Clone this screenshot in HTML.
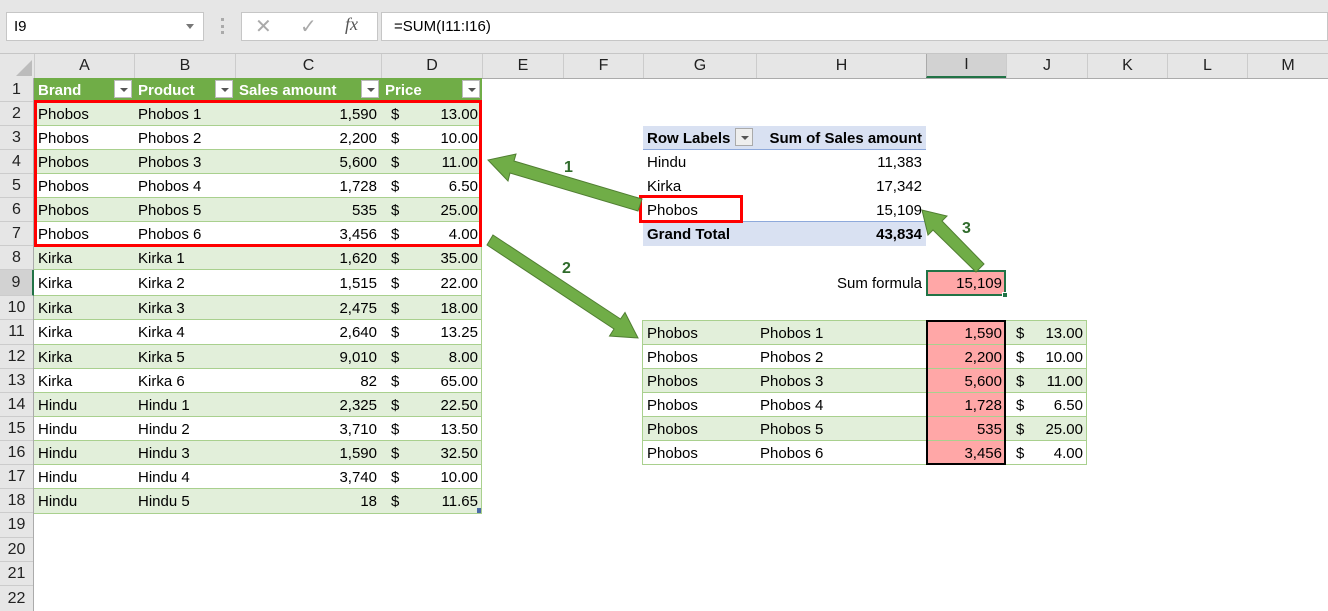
<!DOCTYPE html>
<html><head><meta charset="utf-8"><style>
*{margin:0;padding:0;box-sizing:border-box}
body{width:1328px;height:611px;overflow:hidden;background:#fff;position:relative;font-family:"Liberation Sans",Calibri,sans-serif;font-size:15px;color:#000}
.a{position:absolute}
.c{position:absolute;display:flex;align-items:center;padding:0 4px;white-space:nowrap}
.r{justify-content:flex-end}
.h{position:absolute;background:#e6e6e6;color:#222;display:flex;align-items:center;justify-content:center;font-size:16px}
.g{background:#e2efda}
.row{position:absolute;left:34px;width:448px;border-bottom:1px solid #a9d08e}
.dd{position:absolute;width:18px;height:18px;background:#fff;border:1px solid #bbb}
.dd:after{content:"";position:absolute;left:5px;top:7px;border:4px solid transparent;border-top:4px solid #555}
</style></head><body>
<div class="a" style="left:0;top:0;width:1328px;height:54px;background:#e6e6e6"></div>
<div class="a" style="left:6px;top:12px;width:198px;height:29px;background:#fff;border:1px solid #c6c6c6"></div>
<div class="a" style="left:14px;top:18px;font-size:15px">I9</div>
<div class="a" style="left:186px;top:24px;border:4px solid transparent;border-top:5px solid #777"></div>
<div class="a" style="left:221px;top:18px;width:3px;height:16px;border-left:3px dotted #aaa"></div>
<div class="a" style="left:241px;top:12px;width:137px;height:29px;background:#fff;border:1px solid #c6c6c6"></div>
<div class="a" style="left:255px;top:14px;color:#aaa;font-size:20px">✕</div>
<div class="a" style="left:300px;top:14px;color:#aaa;font-size:20px">✓</div>
<div class="a" style="left:345px;top:14px;color:#555;font-size:18px;font-style:italic;font-family:'Liberation Serif',serif">fx</div>
<div class="a" style="left:381px;top:12px;width:947px;height:29px;background:#fff;border:1px solid #c6c6c6"></div>
<div class="a" style="left:394px;top:18px">=SUM(I11:I16)</div>
<div class="a" style="left:0;top:53px;width:1328px;height:26px;background:#e6e6e6;border-top:1px solid #c6c6c6;border-bottom:1px solid #ababab"></div>
<div class="a" style="left:16px;top:60px;border:8px solid transparent;border-right:8px solid #bcbcbc;border-bottom:8px solid #bcbcbc"></div>
<div class="h" style="left:34px;top:54px;width:100px;height:24px;border-left:1px solid #ccc">A</div>
<div class="h" style="left:134px;top:54px;width:101px;height:24px;border-left:1px solid #ccc">B</div>
<div class="h" style="left:235px;top:54px;width:146px;height:24px;border-left:1px solid #ccc">C</div>
<div class="h" style="left:381px;top:54px;width:101px;height:24px;border-left:1px solid #ccc">D</div>
<div class="h" style="left:482px;top:54px;width:81px;height:24px;border-left:1px solid #ccc">E</div>
<div class="h" style="left:563px;top:54px;width:80px;height:24px;border-left:1px solid #ccc">F</div>
<div class="h" style="left:643px;top:54px;width:113px;height:24px;border-left:1px solid #ccc">G</div>
<div class="h" style="left:756px;top:54px;width:170px;height:24px;border-left:1px solid #ccc">H</div>
<div class="h" style="left:926px;top:54px;width:80px;height:24px;background:#d2d2d2;border-bottom:2px solid #217346;border-left:1px solid #aaa">I</div>
<div class="h" style="left:1006px;top:54px;width:81px;height:24px;border-left:1px solid #ccc">J</div>
<div class="h" style="left:1087px;top:54px;width:80px;height:24px;border-left:1px solid #ccc">K</div>
<div class="h" style="left:1167px;top:54px;width:80px;height:24px;border-left:1px solid #ccc">L</div>
<div class="h" style="left:1247px;top:54px;width:81px;height:24px;border-left:1px solid #ccc">M</div>
<div class="a" style="left:0;top:78px;width:34px;height:533px;background:#e6e6e6;border-right:1px solid #ababab"></div>
<div class="h" style="left:0;top:78px;width:33px;height:24px;border-bottom:1px solid #ccc">1</div>
<div class="h" style="left:0;top:102px;width:33px;height:24px;border-bottom:1px solid #ccc">2</div>
<div class="h" style="left:0;top:126px;width:33px;height:24px;border-bottom:1px solid #ccc">3</div>
<div class="h" style="left:0;top:150px;width:33px;height:24px;border-bottom:1px solid #ccc">4</div>
<div class="h" style="left:0;top:174px;width:33px;height:24px;border-bottom:1px solid #ccc">5</div>
<div class="h" style="left:0;top:198px;width:33px;height:24px;border-bottom:1px solid #ccc">6</div>
<div class="h" style="left:0;top:222px;width:33px;height:24px;border-bottom:1px solid #ccc">7</div>
<div class="h" style="left:0;top:246px;width:33px;height:24px;border-bottom:1px solid #ccc">8</div>
<div class="h" style="left:0;top:270px;width:34px;height:26px;border-bottom:1px solid #ccc;background:#d2d2d2;border-right:2px solid #217346">9</div>
<div class="h" style="left:0;top:296px;width:33px;height:24px;border-bottom:1px solid #ccc">10</div>
<div class="h" style="left:0;top:320px;width:33px;height:25px;border-bottom:1px solid #ccc">11</div>
<div class="h" style="left:0;top:345px;width:33px;height:24px;border-bottom:1px solid #ccc">12</div>
<div class="h" style="left:0;top:369px;width:33px;height:24px;border-bottom:1px solid #ccc">13</div>
<div class="h" style="left:0;top:393px;width:33px;height:24px;border-bottom:1px solid #ccc">14</div>
<div class="h" style="left:0;top:417px;width:33px;height:24px;border-bottom:1px solid #ccc">15</div>
<div class="h" style="left:0;top:441px;width:33px;height:24px;border-bottom:1px solid #ccc">16</div>
<div class="h" style="left:0;top:465px;width:33px;height:24px;border-bottom:1px solid #ccc">17</div>
<div class="h" style="left:0;top:489px;width:33px;height:24px;border-bottom:1px solid #ccc">18</div>
<div class="h" style="left:0;top:513px;width:33px;height:25px;border-bottom:1px solid #ccc">19</div>
<div class="h" style="left:0;top:538px;width:33px;height:24px;border-bottom:1px solid #ccc">20</div>
<div class="h" style="left:0;top:562px;width:33px;height:24px;border-bottom:1px solid #ccc">21</div>
<div class="h" style="left:0;top:586px;width:33px;height:25px">22</div>

<div class="a" style="left:34px;top:78px;width:448px;height:24px;background:#70ad47"></div>
<div class="c" style="left:34px;top:78px;height:24px;color:#fff;font-weight:bold">Brand</div><div class="dd" style="left:114px;top:80px"></div>
<div class="c" style="left:134px;top:78px;height:24px;color:#fff;font-weight:bold">Product</div><div class="dd" style="left:215px;top:80px"></div>
<div class="c" style="left:235px;top:78px;height:24px;color:#fff;font-weight:bold">Sales amount</div><div class="dd" style="left:361px;top:80px"></div>
<div class="c" style="left:381px;top:78px;height:24px;color:#fff;font-weight:bold">Price</div><div class="dd" style="left:462px;top:80px"></div>

<div class="row g" style="top:102px;height:24px"></div><div class="c" style="left:34px;top:102px;height:24px">Phobos</div><div class="c" style="left:134px;top:102px;height:24px">Phobos 1</div><div class="c r" style="left:235px;top:102px;height:24px;width:146px">1,590</div><div class="c" style="left:387px;top:102px;height:24px">$</div><div class="c r" style="left:381px;top:102px;height:24px;width:101px">13.00</div>
<div class="row" style="top:126px;height:24px"></div><div class="c" style="left:34px;top:126px;height:24px">Phobos</div><div class="c" style="left:134px;top:126px;height:24px">Phobos 2</div><div class="c r" style="left:235px;top:126px;height:24px;width:146px">2,200</div><div class="c" style="left:387px;top:126px;height:24px">$</div><div class="c r" style="left:381px;top:126px;height:24px;width:101px">10.00</div>
<div class="row g" style="top:150px;height:24px"></div><div class="c" style="left:34px;top:150px;height:24px">Phobos</div><div class="c" style="left:134px;top:150px;height:24px">Phobos 3</div><div class="c r" style="left:235px;top:150px;height:24px;width:146px">5,600</div><div class="c" style="left:387px;top:150px;height:24px">$</div><div class="c r" style="left:381px;top:150px;height:24px;width:101px">11.00</div>
<div class="row" style="top:174px;height:24px"></div><div class="c" style="left:34px;top:174px;height:24px">Phobos</div><div class="c" style="left:134px;top:174px;height:24px">Phobos 4</div><div class="c r" style="left:235px;top:174px;height:24px;width:146px">1,728</div><div class="c" style="left:387px;top:174px;height:24px">$</div><div class="c r" style="left:381px;top:174px;height:24px;width:101px">6.50</div>
<div class="row g" style="top:198px;height:24px"></div><div class="c" style="left:34px;top:198px;height:24px">Phobos</div><div class="c" style="left:134px;top:198px;height:24px">Phobos 5</div><div class="c r" style="left:235px;top:198px;height:24px;width:146px">535</div><div class="c" style="left:387px;top:198px;height:24px">$</div><div class="c r" style="left:381px;top:198px;height:24px;width:101px">25.00</div>
<div class="row" style="top:222px;height:24px"></div><div class="c" style="left:34px;top:222px;height:24px">Phobos</div><div class="c" style="left:134px;top:222px;height:24px">Phobos 6</div><div class="c r" style="left:235px;top:222px;height:24px;width:146px">3,456</div><div class="c" style="left:387px;top:222px;height:24px">$</div><div class="c r" style="left:381px;top:222px;height:24px;width:101px">4.00</div>
<div class="row g" style="top:246px;height:24px"></div><div class="c" style="left:34px;top:246px;height:24px">Kirka</div><div class="c" style="left:134px;top:246px;height:24px">Kirka 1</div><div class="c r" style="left:235px;top:246px;height:24px;width:146px">1,620</div><div class="c" style="left:387px;top:246px;height:24px">$</div><div class="c r" style="left:381px;top:246px;height:24px;width:101px">35.00</div>
<div class="row" style="top:270px;height:26px"></div><div class="c" style="left:34px;top:270px;height:26px">Kirka</div><div class="c" style="left:134px;top:270px;height:26px">Kirka 2</div><div class="c r" style="left:235px;top:270px;height:26px;width:146px">1,515</div><div class="c" style="left:387px;top:270px;height:26px">$</div><div class="c r" style="left:381px;top:270px;height:26px;width:101px">22.00</div>
<div class="row g" style="top:296px;height:24px"></div><div class="c" style="left:34px;top:296px;height:24px">Kirka</div><div class="c" style="left:134px;top:296px;height:24px">Kirka 3</div><div class="c r" style="left:235px;top:296px;height:24px;width:146px">2,475</div><div class="c" style="left:387px;top:296px;height:24px">$</div><div class="c r" style="left:381px;top:296px;height:24px;width:101px">18.00</div>
<div class="row" style="top:320px;height:25px"></div><div class="c" style="left:34px;top:320px;height:25px">Kirka</div><div class="c" style="left:134px;top:320px;height:25px">Kirka 4</div><div class="c r" style="left:235px;top:320px;height:25px;width:146px">2,640</div><div class="c" style="left:387px;top:320px;height:25px">$</div><div class="c r" style="left:381px;top:320px;height:25px;width:101px">13.25</div>
<div class="row g" style="top:345px;height:24px"></div><div class="c" style="left:34px;top:345px;height:24px">Kirka</div><div class="c" style="left:134px;top:345px;height:24px">Kirka 5</div><div class="c r" style="left:235px;top:345px;height:24px;width:146px">9,010</div><div class="c" style="left:387px;top:345px;height:24px">$</div><div class="c r" style="left:381px;top:345px;height:24px;width:101px">8.00</div>
<div class="row" style="top:369px;height:24px"></div><div class="c" style="left:34px;top:369px;height:24px">Kirka</div><div class="c" style="left:134px;top:369px;height:24px">Kirka 6</div><div class="c r" style="left:235px;top:369px;height:24px;width:146px">82</div><div class="c" style="left:387px;top:369px;height:24px">$</div><div class="c r" style="left:381px;top:369px;height:24px;width:101px">65.00</div>
<div class="row g" style="top:393px;height:24px"></div><div class="c" style="left:34px;top:393px;height:24px">Hindu</div><div class="c" style="left:134px;top:393px;height:24px">Hindu 1</div><div class="c r" style="left:235px;top:393px;height:24px;width:146px">2,325</div><div class="c" style="left:387px;top:393px;height:24px">$</div><div class="c r" style="left:381px;top:393px;height:24px;width:101px">22.50</div>
<div class="row" style="top:417px;height:24px"></div><div class="c" style="left:34px;top:417px;height:24px">Hindu</div><div class="c" style="left:134px;top:417px;height:24px">Hindu 2</div><div class="c r" style="left:235px;top:417px;height:24px;width:146px">3,710</div><div class="c" style="left:387px;top:417px;height:24px">$</div><div class="c r" style="left:381px;top:417px;height:24px;width:101px">13.50</div>
<div class="row g" style="top:441px;height:24px"></div><div class="c" style="left:34px;top:441px;height:24px">Hindu</div><div class="c" style="left:134px;top:441px;height:24px">Hindu 3</div><div class="c r" style="left:235px;top:441px;height:24px;width:146px">1,590</div><div class="c" style="left:387px;top:441px;height:24px">$</div><div class="c r" style="left:381px;top:441px;height:24px;width:101px">32.50</div>
<div class="row" style="top:465px;height:24px"></div><div class="c" style="left:34px;top:465px;height:24px">Hindu</div><div class="c" style="left:134px;top:465px;height:24px">Hindu 4</div><div class="c r" style="left:235px;top:465px;height:24px;width:146px">3,740</div><div class="c" style="left:387px;top:465px;height:24px">$</div><div class="c r" style="left:381px;top:465px;height:24px;width:101px">10.00</div>
<div class="row g" style="top:489px;height:25px"></div><div class="c" style="left:34px;top:489px;height:24px">Hindu</div><div class="c" style="left:134px;top:489px;height:24px">Hindu 5</div><div class="c r" style="left:235px;top:489px;height:24px;width:146px">18</div><div class="c" style="left:387px;top:489px;height:24px">$</div><div class="c r" style="left:381px;top:489px;height:24px;width:101px">11.65</div>
<div class="a" style="left:477px;top:508px;width:5px;height:5px;background:#4a6aa8"></div>
<div class="a" style="left:481px;top:102px;width:1px;height:412px;background:#a9d08e"></div>
<div class="a" style="left:34px;top:100px;width:448px;height:147px;border:3px solid #f00"></div>

<div class="a" style="left:643px;top:126px;width:283px;height:24px;background:#d9e1f2;border-bottom:1px solid #8ea9db"></div>
<div class="c" style="left:643px;top:126px;height:24px;font-weight:bold">Row Labels</div>
<div class="dd" style="left:735px;top:128px;border-color:#aaa;background:#eee"></div>
<div class="c r" style="left:756px;top:126px;height:24px;width:170px;font-weight:bold">Sum of Sales amount</div>
<div class="c" style="left:643px;top:150px;height:24px">Hindu</div><div class="c r" style="left:756px;top:150px;height:24px;width:170px">11,383</div>
<div class="c" style="left:643px;top:174px;height:24px">Kirka</div><div class="c r" style="left:756px;top:174px;height:24px;width:170px">17,342</div>
<div class="c" style="left:643px;top:198px;height:24px">Phobos</div><div class="c r" style="left:756px;top:198px;height:24px;width:170px">15,109</div>
<div class="a" style="left:643px;top:221px;width:283px;height:25px;background:#d9e1f2;border-top:1px solid #8ea9db"></div>
<div class="c" style="left:643px;top:222px;height:24px;font-weight:bold">Grand Total</div><div class="c r" style="left:756px;top:222px;height:24px;width:170px;font-weight:bold">43,834</div>
<div class="a" style="left:639px;top:195px;width:104px;height:28px;border:3px solid #f00"></div>

<div class="c r" style="left:756px;top:270px;height:26px;width:170px">Sum formula</div>
<div class="a" style="left:926px;top:270px;width:80px;height:26px;background:#ffa7a7;border:2px solid #217346"></div>
<div class="c r" style="left:926px;top:270px;height:26px;width:80px">15,109</div>
<div class="a" style="left:1002px;top:292px;width:6px;height:6px;background:#217346;border:1px solid #fff"></div>

<div class="a" style="left:642px;top:320px;width:445px;height:145px;border:1px solid #a9d08e"></div>
<div class="a g" style="left:643px;top:321px;width:443px;height:24px;border-bottom:1px solid #a9d08e"></div>
<div class="a" style="left:643px;top:345px;width:443px;height:24px;border-bottom:1px solid #a9d08e"></div>
<div class="a g" style="left:643px;top:369px;width:443px;height:24px;border-bottom:1px solid #a9d08e"></div>
<div class="a" style="left:643px;top:393px;width:443px;height:24px;border-bottom:1px solid #a9d08e"></div>
<div class="a g" style="left:643px;top:417px;width:443px;height:24px;border-bottom:1px solid #a9d08e"></div>
<div class="a" style="left:926px;top:320px;width:80px;height:145px;background:#ffa7a7;border:2px solid #000"></div>
<div class="a" style="left:928px;top:344px;width:76px;height:1px;background:#a9d08e"></div>
<div class="a" style="left:928px;top:368px;width:76px;height:1px;background:#a9d08e"></div>
<div class="a" style="left:928px;top:392px;width:76px;height:1px;background:#a9d08e"></div>
<div class="a" style="left:928px;top:416px;width:76px;height:1px;background:#a9d08e"></div>
<div class="a" style="left:928px;top:440px;width:76px;height:1px;background:#a9d08e"></div>

<div class="c" style="left:643px;top:321px;height:24px">Phobos</div><div class="c" style="left:756px;top:321px;height:24px">Phobos 1</div><div class="c r" style="left:926px;top:321px;height:24px;width:80px">1,590</div><div class="c" style="left:1012px;top:321px;height:24px">$</div><div class="c r" style="left:1006px;top:321px;height:24px;width:81px">13.00</div>
<div class="c" style="left:643px;top:345px;height:24px">Phobos</div><div class="c" style="left:756px;top:345px;height:24px">Phobos 2</div><div class="c r" style="left:926px;top:345px;height:24px;width:80px">2,200</div><div class="c" style="left:1012px;top:345px;height:24px">$</div><div class="c r" style="left:1006px;top:345px;height:24px;width:81px">10.00</div>
<div class="c" style="left:643px;top:369px;height:24px">Phobos</div><div class="c" style="left:756px;top:369px;height:24px">Phobos 3</div><div class="c r" style="left:926px;top:369px;height:24px;width:80px">5,600</div><div class="c" style="left:1012px;top:369px;height:24px">$</div><div class="c r" style="left:1006px;top:369px;height:24px;width:81px">11.00</div>
<div class="c" style="left:643px;top:393px;height:24px">Phobos</div><div class="c" style="left:756px;top:393px;height:24px">Phobos 4</div><div class="c r" style="left:926px;top:393px;height:24px;width:80px">1,728</div><div class="c" style="left:1012px;top:393px;height:24px">$</div><div class="c r" style="left:1006px;top:393px;height:24px;width:81px">6.50</div>
<div class="c" style="left:643px;top:417px;height:24px">Phobos</div><div class="c" style="left:756px;top:417px;height:24px">Phobos 5</div><div class="c r" style="left:926px;top:417px;height:24px;width:80px">535</div><div class="c" style="left:1012px;top:417px;height:24px">$</div><div class="c r" style="left:1006px;top:417px;height:24px;width:81px">25.00</div>
<div class="c" style="left:643px;top:441px;height:24px">Phobos</div><div class="c" style="left:756px;top:441px;height:24px">Phobos 6</div><div class="c r" style="left:926px;top:441px;height:24px;width:80px">3,456</div><div class="c" style="left:1012px;top:441px;height:24px">$</div><div class="c r" style="left:1006px;top:441px;height:24px;width:81px">4.00</div>

<svg class="a" style="left:0;top:0" width="1328" height="611">
<g fill="#70ad47" stroke="#507e32" stroke-width="1">
<polygon points="642,199 514,161 516,154 488,160 508,181 510,173 638,211"/>
<polygon points="493,235 620.5,319 625,312.5 638,338 609.5,336 614,329 487,245"/>
<polygon points="984,264 942,221 947,216 922,210 928,235 933,230 976,272"/>
</g>
<g fill="#2f6b2b" font-weight="bold" font-size="16" font-family="Liberation Sans,sans-serif">
<text x="564" y="172">1</text><text x="562" y="273">2</text><text x="962" y="233">3</text>
</g>
</svg>
</body></html>
